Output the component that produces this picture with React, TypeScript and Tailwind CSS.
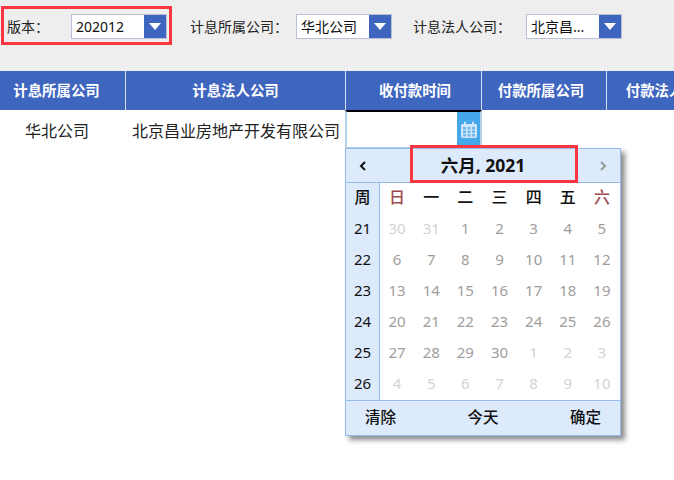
const font = { fontFamily: '"Noto Sans", "Noto Sans CJK SC", sans-serif' };

function Select({ value, w }: { value: string; w: string }) {
  return (
    <div className={`flex h-[25px] ${w} border border-[#b9c0d3] bg-white`}>
      <span className="flex-1 truncate pl-[4px] text-[14px] leading-[23px] text-[#111]">{value}</span>
      <span className="flex w-[22px] items-center justify-center bg-[#3f66bf]">
        <svg width="12" height="7" viewBox="0 0 12 7"><path d="M0 0h12L6 7z" fill="#fff" /></svg>
      </span>
    </div>
  );
}

function Filter({ label, value, labelW, w, ml }: { label: string; value: string; labelW: string; w: string; ml: string }) {
  return (
    <div className={`flex items-center ${ml}`}>
      <span className={`${labelW} text-[14px] text-[#222]`}>{label}</span>
      <Select value={value} w={w} />
    </div>
  );
}

const cols = [
  ['计息所属公司', 'w-[126px] pr-[12px]'],
  ['计息法人公司', 'w-[220px]'],
  ['收付款时间', 'w-[136px] pl-[3px]'],
  ['付款所属公司', 'w-[125px] pr-[6px]'],
  ['付款法人公司', 'w-[125px]'],
];

const weeks: [string, [string, boolean][]][] = [
  ['21', [['30', true], ['31', true], ['1', false], ['2', false], ['3', false], ['4', false], ['5', false]]],
  ['22', [['6', false], ['7', false], ['8', false], ['9', false], ['10', false], ['11', false], ['12', false]]],
  ['23', [['13', false], ['14', false], ['15', false], ['16', false], ['17', false], ['18', false], ['19', false]]],
  ['24', [['20', false], ['21', false], ['22', false], ['23', false], ['24', false], ['25', false], ['26', false]]],
  ['25', [['27', false], ['28', false], ['29', false], ['30', false], ['1', true], ['2', true], ['3', true]]],
  ['26', [['4', true], ['5', true], ['6', true], ['7', true], ['8', true], ['9', true], ['10', true]]],
];

const days: [string, string][] = [
  ['日', 'text-[#9c4a4f]'], ['一', 'text-[#111]'], ['二', 'text-[#111]'], ['三', 'text-[#111]'],
  ['四', 'text-[#111]'], ['五', 'text-[#111]'], ['六', 'text-[#9c4a4f]'],
];

function Calendar() {
  return (
    <div className="absolute left-[345px] top-[148px] w-[276px] border border-[#93bbee] bg-white shadow-[4px_4px_5px_rgba(0,0,0,0.45)]">
      <div className="flex h-[34px] items-center justify-between border-b border-[#93bbee] bg-[#dceafb] px-[13px]">
        <svg width="8" height="12" viewBox="0 0 8 12"><path d="M6 2 2 6l4 4" fill="none" stroke="#111" strokeWidth="2" /></svg>
        <span className="text-[17.5px] font-bold leading-[31px] text-[#111]">六月, 2021</span>
        <svg width="8" height="12" viewBox="0 0 8 12"><path d="M2 2l4 4-4 4" fill="none" stroke="#999" strokeWidth="2" /></svg>
      </div>
      <div className="flex">
        <div className="w-[34px] border-r border-[#93bbee] bg-[#dceafb] pb-[1px] text-center text-[15px] leading-[31px] text-[#111]">
          <div className="-mt-[1px] text-[16px] font-medium">周</div>
          {weeks.map(([w]) => <div key={w}>{w}</div>)}
        </div>
        <div className="-mt-[1px] flex-1 pb-[1px] pr-[1px]">
          <div className="grid grid-cols-7 text-center text-[16px] font-medium leading-[31px]">
            {days.map(([d, c]) => <div key={d} className={c}>{d}</div>)}
          </div>
          {weeks.map(([w, ds]) => (
            <div key={w} className="grid grid-cols-7 text-center text-[15px] leading-[31px]">
              {ds.map(([d, off], i) => (
                <div key={i} className={off ? 'text-[#d6d2d2]' : 'text-[#a19d9d]'}>{d}</div>
              ))}
            </div>
          ))}
        </div>
      </div>
      <div className="flex h-[35px] items-center justify-between border-t border-[#93bbee] bg-[#dceafb] pl-[19px] pr-[19px] text-[15.5px] font-medium text-[#111]">
        <span>清除</span>
        <span>今天</span>
        <span>确定</span>
      </div>
    </div>
  );
}

export default function App() {
  return (
    <div className="relative h-[480px] w-[674px] overflow-hidden bg-white" style={font}>
      <div className="flex h-[71px] items-start bg-[#eeeeee] pt-[14px]">
        <Filter label="版本：" value="202012" labelW="w-[71px] pl-[7px]" w="w-[96px]" ml="ml-0" />
        <Filter label="计息所属公司：" value="华北公司" labelW="w-[106px]" w="w-[96px]" ml="ml-[23px]" />
        <Filter label="计息法人公司：" value="北京昌..." labelW="w-[113px]" w="w-[96px]" ml="ml-[21px]" />
      </div>
      <div className="flex h-[39px] bg-[#3f66bf]">
        {cols.map(([c, w]) => (
          <div key={c} className={`${w} shrink-0 whitespace-nowrap border-r border-[#d5ddf0] text-center text-[14.4px] font-bold leading-[39px] text-white`}>{c}</div>
        ))}
      </div>
      <div className="flex h-[39px] text-[16px] text-[#222]">
        <div className="w-[126px] pr-[12px] text-center leading-[42px]">华北公司</div>
        <div className="w-[219px] whitespace-nowrap pl-[1px] text-center leading-[42px]">北京昌业房地产开发有限公司</div>
        <div className="flex h-[39px] w-[137px] border-2 border-[#b4d0e8] border-t-black bg-white">
          <div className="flex-1" />
          <div className="flex w-[23px] items-center justify-center bg-[#45a8ea]">
            <svg width="16" height="17" viewBox="0 0 16 17" fill="#cfe6f8">
              <path d="M1 3h14a1 1 0 0 1 1 1v11a2 2 0 0 1-2 2H2a2 2 0 0 1-2-2V4a1 1 0 0 1 1-1z" />
              <rect x="3" y="0.5" width="2" height="4" rx="1" />
              <rect x="11" y="0.5" width="2" height="4" rx="1" />
              <g fill="#6db9ee">
                <rect x="2" y="6" width="3" height="2.5" /><rect x="6.5" y="6" width="3" height="2.5" /><rect x="11" y="6" width="3" height="2.5" />
                <rect x="2" y="9.5" width="3" height="2.5" /><rect x="6.5" y="9.5" width="3" height="2.5" /><rect x="11" y="9.5" width="3" height="2.5" />
                <rect x="2" y="13" width="3" height="2.5" /><rect x="6.5" y="13" width="3" height="2.5" /><rect x="11" y="13" width="3" height="2.5" />
              </g>
            </svg>
          </div>
        </div>
      </div>
      <Calendar />
      <div className="pointer-events-none absolute left-[1px] top-[6px] h-[39px] w-[171px] border-[3px] border-[#fb3640]" />
      <div className="pointer-events-none absolute left-[410px] top-[145px] h-[38px] w-[168px] border-[3px] border-[#fb3640]" />
    </div>
  );
}
